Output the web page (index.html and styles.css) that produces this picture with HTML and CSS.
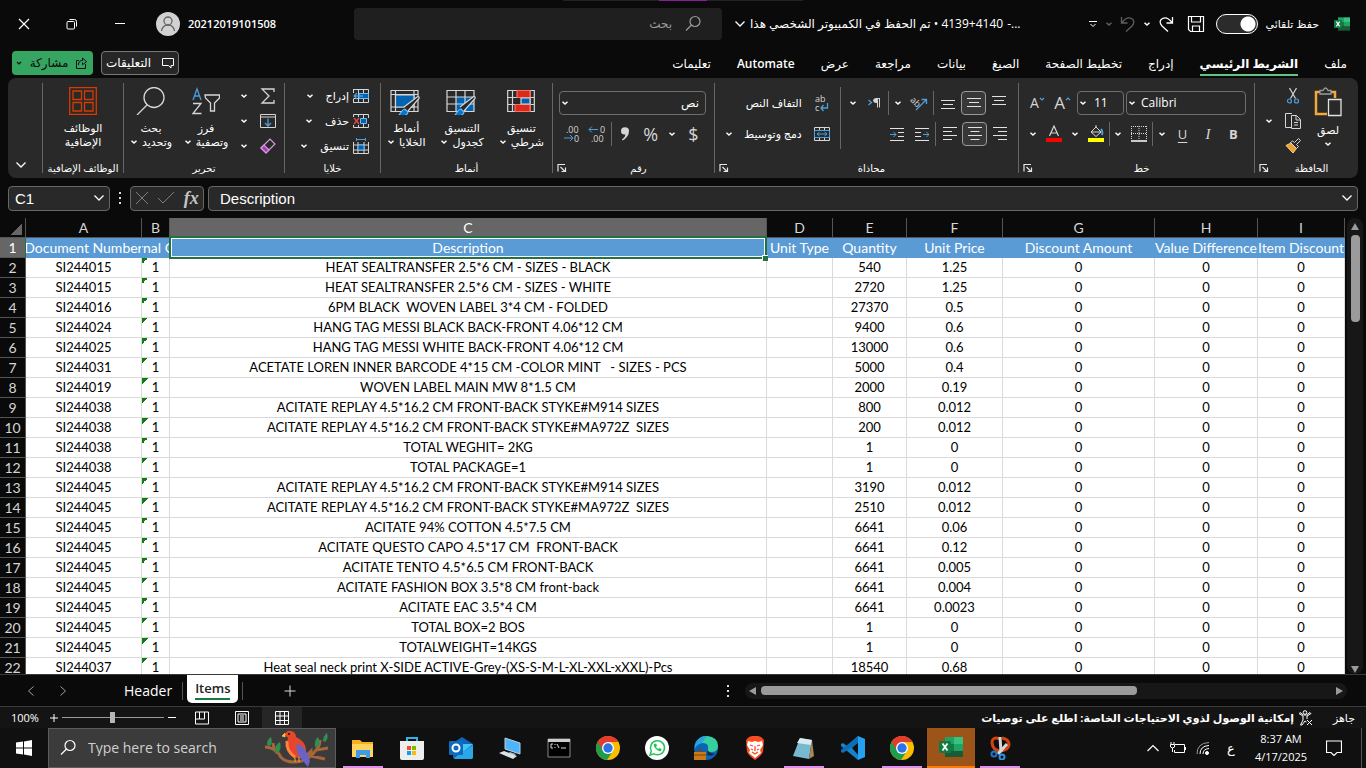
FILE: index.html
```html
<!DOCTYPE html>
<html lang="ar">
<head>
<meta charset="utf-8">
<title>4139+4140 - Excel</title>
<link rel="stylesheet" href="styles.css">
</head>
<body>
<svg class="defs" aria-hidden="true">
  <symbol id="chev" viewBox="0 0 8 8"><path d="M1.5 2.7 4 5l2.500-2.300" fill="none" stroke="#fff" stroke-width="1.500"/></symbol>
  <symbol id="chev-l" viewBox="0 0 12 12"><path d="M1.500 3.500 6 8l4.500-4.500" fill="none" stroke="currentColor" stroke-width="1.300"/></symbol>
  <symbol id="launch" viewBox="0 0 10 10"><path d="M1 8.500V1.500h7M3.500 4l4.500 4.500M8.500 4.500v4h-4" fill="none" stroke="#e6e6e6" stroke-width="1.200"/></symbol>
  <symbol id="mag" viewBox="0 0 18 18"><circle cx="11" cy="6.500" r="5" fill="none" stroke="currentColor" stroke-width="1.200"/><path d="M7.500 10 2 15.500" stroke="currentColor" stroke-width="1.300"/></symbol>
  <symbol id="chrome" viewBox="0 0 24 24"><circle cx="12" cy="12" r="12" fill="#fbbc04"/><path d="M1.600 6A12 12 0 0 0 11 24l6-9-5-3z" fill="#1f9d4d"/><path d="M1.600 6A12 12 0 0 1 22.400 6H12z" fill="#e33b2e"/><path d="m1.600 6 5.400 9 5-9z" fill="#e33b2e"/><path d="m1.600 6 5.400 9-4 1z" fill="#1f9d4d"/><circle cx="12" cy="12" r="6" fill="#fff"/><circle cx="12" cy="12" r="4.700" fill="#2a74ea"/></symbol>
  <symbol id="excel" viewBox="0 0 24 22"><path d="M6 1h9v7H6z" fill="#21a366"/><path d="M15 1h9v7h-9z" fill="#33c481"/><path d="M6 8h9v7H6z" fill="#107c41"/><path d="M15 8h9v7h-9z" fill="#21a366"/><path d="M6 15h18v6H6z" fill="#185c37"/><rect y="5" width="12" height="12" rx="1" fill="#107c41"/><path d="m3.500 7.500 5 7m0-7-5 7" stroke="#fff" stroke-width="1.800"/></symbol>
</svg>

<header class="titlebar">
  <div class="title-left">
    <button class="win" aria-label="إغلاق"><svg width="12" height="12"><path d="m1 1 10 10M11 1 1 11" stroke="#fff" stroke-width="1.200"/></svg></button>
    <button class="win" aria-label="استعادة"><svg width="12" height="12" fill="none" stroke="#fff"><rect x="1" y="3.500" width="7.500" height="7.500" rx="1"/><path d="M3.500 1.500h5q2 0 2 2v5"/></svg></button>
    <button class="win" aria-label="تصغير"><svg width="12" height="12"><path d="M1 5.500h10" stroke="#fff"/></svg></button>
    <button class="user"><svg width="24" height="24" fill="none" stroke="#666" stroke-width="1.300"><circle cx="12" cy="12" r="12" fill="#d2d2d2" stroke="none"/><circle cx="12" cy="9" r="4"/><path d="M5.500 19q1-6 6.500-6t6.500 6"/></svg><span>20212019101508</span></button>
  </div>
  <label class="search"><input type="search" placeholder="بحث" dir="rtl" aria-label="بحث"><svg width="18" height="18"><use href="#mag"/></svg></label>
  <div class="title-right">
    <button class="filename"><svg width="12" height="12"><use href="#chev-l"/></svg><span dir="rtl">4139+4140 • تم الحفظ في الكمبيوتر الشخصي هذا</span><span>-...</span></button>
    <div class="quick">
      <button aria-label="تخصيص"><svg width="10" height="10" fill="none" stroke="#fff"><path d="M1 2.500h8M2.500 5 5 7.500 7.500 5"/></svg></button>
      <button class="dim" aria-label="خيارات التراجع"><svg width="8" height="8"><use href="#chev"/></svg></button>
      <button class="dim" aria-label="تراجع"><svg width="16" height="18" fill="none" stroke="#fff" stroke-width="1.300"><path d="M1.500 2v6h6M2 7.500Q7 1 11.500 3.500T12 11l-6 5.500"/></svg></button>
      <button aria-label="خيارات الإعادة"><svg width="8" height="8"><use href="#chev"/></svg></button>
      <button aria-label="إعادة"><svg width="16" height="18" fill="none" stroke="#fff" stroke-width="1.300"><path d="M14.500 2v6h-6M14 7.500Q9 1 4.500 3.500T4 11l6 5.500"/></svg></button>
      <button class="save" aria-label="حفظ"><svg width="18" height="18" fill="none" stroke="#fff" stroke-width="1.200"><path d="M1.500 1.500h15v15h-13l-2-2zM4.500 1.500V7h9V1.500M5.500 16.500V11h7v5.500"/></svg></button>
      <input type="checkbox" class="toggle" id="autosave" checked>
      <label for="autosave" class="ar-s" dir="rtl">حفظ تلقائي</label>
      <svg class="app" width="16" height="16"><use href="#excel"/></svg>
    </div>
  </div>
</header>

<nav class="tabs">
  <button class="share"><svg width="8" height="8"><path d="M2 3l2 2 2-2" fill="none" stroke="#111" stroke-width="1.200"/></svg><span>مشاركة</span><svg width="12" height="12" fill="none" stroke="#111"><path d="M4 3.500H1.500v8h9V7M3.500 8q0-4.500 4-4.500V1l4 3.700-4 3V5.500"/></svg></button>
  <button class="comments"><span>التعليقات</span><svg width="12" height="12" fill="none" stroke="#fff"><path d="M.5 1.500h11v7H9v2.500L6.500 8.500h-6z"/></svg></button>
  <div class="tablist">
    <button>تعليمات</button><button class="lat">Automate</button><button>عرض</button><button>مراجعة</button><button>بيانات</button><button>الصيغ</button><button>تخطيط الصفحة</button><button>إدراج</button><button class="on">الشريط الرئيسي</button><button>ملف</button>
  </div>
</nav>

<section class="ribbon">
  <div class="g collapse"><button aria-label="طي الشريط"><svg width="12" height="12"><use href="#chev-l"/></svg></button></div>

  <div class="g">
    <div class="body center">
      <button class="big"><svg width="28" height="28" fill="none" stroke="#d83b01" stroke-width="1.300"><path d="M.7.700h26.600v26.600H.7zM4 4h8.500v8.500H4zM15.500 4H24v8.500h-8.500zM4 15.500h8.500V24H4zM15.500 15.500H24V24h-8.500z"/></svg><span>الوظائف</span><span>الإضافية</span></button>
    </div>
    <div class="foot"><span>الوظائف الإضافية</span></div>
  </div>

  <div class="g">
    <div class="body spread">
      <button class="big"><svg width="30" height="28" fill="none" stroke="#d6d6d6" stroke-width="1.300"><circle cx="18" cy="10.500" r="10"/><path d="M11 18 1 28"/></svg><span>بحث</span><span class="dd"><svg width="8" height="8"><use href="#chev"/></svg>وتحديد</span></button>
      <button class="big"><svg width="28" height="28" fill="none" stroke="#d6d6d6" stroke-width="1.300"><path d="M1 13 5 2l4 11M2.500 9h5" stroke="#4a9fdc"/><path d="M1 16.500h8L1 26.500h8.500M13 8h14.500v3l-5 5v8h-4v-8l-5-5z"/></svg><span>فرز</span><span class="dd"><svg width="8" height="8"><use href="#chev"/></svg>وتصفية</span></button>
      <div class="stack">
        <button aria-label="جمع تلقائي"><svg width="8" height="8"><use href="#chev"/></svg><svg width="16" height="16" fill="none" stroke="#d6d6d6" stroke-width="1.300"><path d="M14 4V1H2l7 7-7 7h12v-3"/></svg></button>
        <button aria-label="تعبئة"><svg width="8" height="8"><use href="#chev"/></svg><svg width="16" height="16" fill="none" stroke="#d6d6d6"><path d="M.5 1.500h15v13H.5zM.5 4h15"/><path d="M8 5.500V13M5 10l3 3 3-3" stroke="#4a9fdc" stroke-width="1.300"/></svg></button>
        <button aria-label="مسح"><svg width="8" height="8"><use href="#chev"/></svg><svg width="16" height="16" fill="none" stroke="#d99be0" stroke-width="1.200"><path d="m1 10 9-9 5 5-9 9z"/><path d="m1 10 3-3 5 5-3 3z" fill="#a33db5"/></svg></button>
      </div>
    </div>
    <div class="foot"><span>تحرير</span></div>
  </div>

  <div class="g">
    <div class="body">
      <div class="stack wide">
        <button><svg width="8" height="8"><use href="#chev"/></svg><span>إدراج</span><svg width="16" height="16" fill="none" stroke="#d6d6d6"><path d="M.5 1.500h15v13H.5M5.500 1.500v13M10.500 1.500v13M.5 10.500h15M.5 1v4M.5 11v4"/><path d="M6 5.500h9.500v5H6z" fill="#0063b1" stroke="#7ab8ea"/><path d="M10 8H1M4 5 1 8l3 3" stroke="#4a9fdc" stroke-width="1.300"/></svg></button>
        <button><svg width="8" height="8"><use href="#chev"/></svg><span>حذف</span><svg width="16" height="16" fill="none" stroke="#d6d6d6"><path d="M.5 4V1.500h15V5M.5 12v2.500h15V11M5.500 1.500V4M10.500 1.500v13M5.500 12v2.500"/><path d="M7.500 5.500h6v5h-6z" fill="#0063b1" stroke="#7ab8ea"/><path d="m1 5 5 6M6 5l-5 6" stroke="#e04848" stroke-width="1.300"/></svg></button>
        <button><svg width="8" height="8"><use href="#chev"/></svg><span>تنسيق</span><svg width="16" height="16" fill="none" stroke="#d6d6d6"><path d="M.5 4v11.500h15V4M.5 7h15M.5 12h15M5 4v11.500M11 4v11.500"/><path d="M5 7h6v5H5z" fill="#0063b1" stroke="#7ab8ea"/><path d="M3.500 1.500h9M3.500 0v3M12.500 0v3" stroke="#4a9fdc"/></svg></button>
      </div>
    </div>
    <div class="foot"><span>خلايا</span></div>
  </div>

  <div class="g">
    <div class="body spread">
      <button class="big"><svg width="32" height="28" fill="none" stroke="#d6d6d6" stroke-width="1.200"><path d="M1 3.500h27v21H1zM1 7.500h27M5.500 3.500v21M24 3.500v21M1 20h27"/><path d="M5.500 8H24v12H5.500z" fill="#0063b1"/><path d="m14 20 13-10q3-1 2 1.500L18 24" fill="#292929"/><path d="M9 28q4-6 6-6l3 3q-1 5-9 3z" fill="#0078d4" stroke="#7ab8ea"/></svg><span>أنماط</span><span class="dd"><svg width="8" height="8"><use href="#chev"/></svg>الخلايا</span></button>
      <button class="big"><svg width="32" height="28" fill="none" stroke="#d6d6d6" stroke-width="1.200"><path d="M10 10h18v14H10z" fill="#0063b1" stroke="none"/><path d="M1 3.500h27v21H1zM1 10h27M1 17h27M10 3.500v21M19 3.500v21"/><path d="m14 20 13-10q3-1 2 1.500L18 24" fill="#292929"/><path d="M9 28q4-6 6-6l3 3q-1 5-9 3z" fill="#0078d4" stroke="#7ab8ea"/></svg><span>التنسيق</span><span class="dd"><svg width="8" height="8"><use href="#chev"/></svg>كجدول</span></button>
      <button class="big"><svg width="28" height="28" fill="none" stroke="#d6d6d6" stroke-width="1.200"><path d="M.7 3.500h26.600v21H.7zM.7 10.500h26.600M.7 17.500h26.600M5.500 3.500v21M23 3.500v21"/><path d="M10 3.500h13v7H10zM8 17.500h15v7H8z" fill="#d92b1c" stroke="#ff6b60"/><path d="M14 11h9v6h-9z" fill="#0063b1"/></svg><span>تنسيق</span><span class="dd"><svg width="8" height="8"><use href="#chev"/></svg>شرطي</span></button>
    </div>
    <div class="foot"><span>أنماط</span></div>
  </div>

  <div class="g">
    <div class="body rows">
      <div class="row"><div class="combo grow"><svg width="8" height="8"><use href="#chev"/></svg><select dir="rtl" aria-label="تنسيق الأرقام"><option>نص</option></select></div></div>
      <div class="row between">
        <button aria-label="إنقاص المنازل"><svg class="txt" width="18" height="18"><text x="3" y="8">.00</text><text x="11" y="17">0</text><path d="M1 13h9M7 10l3 3-3 3" fill="none" stroke="#4a9fdc"/></svg></button>
        <button aria-label="زيادة المنازل"><svg class="txt" width="18" height="18"><text x="12" y="8">0</text><text x="3" y="17">.00</text><path d="M10 4.500H1M4 1.500l-3 3 3 3" fill="none" stroke="#4a9fdc"/></svg></button>
        <i class="sep"></i>
        <button aria-label="فاصلة"><svg width="10" height="14"><path d="M1 4a4 3.700 0 1 1 8 0q0 6-6.500 9.500l-.5-1Q5.500 10 5.500 7.500 1 8 1 4z" fill="#d6d6d6"/></svg></button>
        <button class="sym">%</button>
        <button class="nar" aria-label="عملات"><svg width="8" height="8"><use href="#chev"/></svg></button>
        <button class="sym">$</button>
      </div>
    </div>
    <div class="foot"><svg class="launch" width="10" height="10"><use href="#launch"/></svg><span>رقم</span></div>
  </div>

  <div class="g">
    <div class="body split">
      <div class="half">
        <div class="row end"><button class="lab"><span>التفاف النص</span><svg class="txt" width="16" height="18"><text x="1" y="8">ab</text><text x="1" y="17">c</text><path d="M13.500 9v5H7M9.500 11 7 14l2.500 3" fill="none" stroke="#4a9fdc" stroke-width="1.300"/></svg></button></div>
        <div class="row between"><button class="nar" aria-label="خيارات الدمج"><svg width="8" height="8"><use href="#chev"/></svg></button><button class="lab"><span>دمج وتوسيط</span><svg width="16" height="16" fill="none" stroke="#d6d6d6"><path d="M.5 1.500h15v13H.5zM5.500 1.500v3M10.500 1.500v3M5.500 11v3M10.500 11v3"/><path d="M.5 4.500h15v7H.5zM3 8h10M5.500 6 3 8l2.500 2M10.500 6 13 8l-2.500 2" stroke="#4a9fdc"/></svg></button></div>
      </div>
      <div class="half wide">
        <div class="row between">
          <button class="nar" aria-label="اتجاه"><svg width="8" height="8"><use href="#chev"/></svg></button>
          <button aria-label="من اليمين لليسار"><svg width="14" height="12" fill="none" stroke="#d6d6d6"><path d="M13 1.500H9M10.500 1.500v9M12.500 1.500v9"/><path d="M10 1.500H8.500q-2 .5-2 2t2 2H10z" fill="#d6d6d6"/><path d="m1.500 3 3 2.500-3 2.500" stroke="#4a9fdc" stroke-width="1.300"/></svg></button>
          <i class="sep"></i>
          <button class="nar" aria-label="اتجاه النص"><svg width="8" height="8"><use href="#chev"/></svg></button>
          <button aria-label="الاتجاه"><svg class="txt" width="18" height="18"><text x="0" y="10" transform="rotate(45 4 8)">ab</text><path d="M6 16 16 6M11.500 5.500H16.500V10" fill="none" stroke="#4a9fdc" stroke-width="1.300"/></svg></button>
          <i class="sep"></i>
          <button aria-label="أسفل"><svg width="14" height="14" stroke="#e2e2e2"><path d="M0 4.500h14M2 8.500h10M0 12.500h14"/></svg></button>
          <button class="sel" aria-label="وسط"><svg width="14" height="14" stroke="#e2e2e2"><path d="M0 2.500h14M2 6.500h10M0 10.500h14"/></svg></button>
          <button aria-label="أعلى"><svg width="14" height="14" stroke="#e2e2e2"><path d="M0 .5h14M2 4.500h10M0 8.500h14"/></svg></button>
        </div>
        <div class="row end">
          <button aria-label="مسافة أقل"><svg width="14" height="14" fill="none" stroke="#e2e2e2"><path d="M0 1.500h14M8 5.500h6M8 9.500h6M0 13.500h14"/><path d="M0 7.500h6M3.500 5 6 7.500 3.500 10" stroke="#4a9fdc"/></svg></button>
          <button aria-label="مسافة أكبر"><svg width="14" height="14" fill="none" stroke="#e2e2e2"><path d="M0 1.500h14M0 5.500h6M0 9.500h6M0 13.500h14"/><path d="M8 7.500h6M11.500 5 14 7.500 11.500 10" stroke="#4a9fdc"/></svg></button>
          <i class="sep"></i>
          <button aria-label="يسار"><svg width="14" height="14" stroke="#e2e2e2"><path d="M0 .5h14M0 4.500h9M0 8.500h14M0 12.500h9"/></svg></button>
          <button class="sel" aria-label="توسيط"><svg width="14" height="14" stroke="#e2e2e2"><path d="M0 .5h14M2.500 4.500h9M0 8.500h14M2.500 12.500h9"/></svg></button>
          <button aria-label="يمين"><svg width="14" height="14" stroke="#e2e2e2"><path d="M0 .5h14M5 4.500h9M0 8.500h14M5 12.500h9"/></svg></button>
        </div>
      </div>
    </div>
    <div class="foot"><svg class="launch" width="10" height="10"><use href="#launch"/></svg><span>محاذاة</span></div>
  </div>

  <div class="g">
    <div class="body rows">
      <div class="row">
        <button class="fs small">A<svg width="6" height="12"><path d="m1 1 2 2 2-2" fill="none" stroke="#4a9fdc" stroke-width="1.200"/></svg></button>
        <button class="fs">A<svg width="6" height="12"><path d="m1 3 2-2 2 2" fill="none" stroke="#4a9fdc" stroke-width="1.200"/></svg></button>
        <div class="combo size"><svg width="8" height="8"><use href="#chev"/></svg><select aria-label="حجم الخط"><option>11</option></select></div>
        <div class="combo grow"><svg width="8" height="8"><use href="#chev"/></svg><select aria-label="الخط"><option>Calibri</option></select></div>
      </div>
      <div class="row between">
        <button class="nar" aria-label="ألوان الخط"><svg width="8" height="8"><use href="#chev"/></svg></button>
        <button aria-label="لون الخط"><svg width="16" height="18"><path d="M3.500 11 8 1l4.500 10M5 8h6" fill="none" stroke="#d6d6d6" stroke-width="1.200"/><path d="M0 13h16v4H0z" fill="#f00"/></svg></button>
        <button class="nar" aria-label="ألوان التعبئة"><svg width="8" height="8"><use href="#chev"/></svg></button>
        <button aria-label="لون التعبئة"><svg width="16" height="18" fill="none" stroke="#d6d6d6"><path d="m8 2 5 5-5 4.500L3 7zM8 2V0M3 7h9"/><path d="M13 4q2 2 1 6" stroke="#4a9fdc" stroke-width="2"/><path d="M0 13h16v4H0z" fill="#ff0" stroke="none"/></svg></button>
        <i class="sep"></i>
        <button class="nar" aria-label="خيارات الحدود"><svg width="8" height="8"><use href="#chev"/></svg></button>
        <button aria-label="حدود"><svg width="16" height="16" fill="none" stroke="#d6d6d6"><path d="M0 .5h16M0 7.500h16M.5 0v14M8 0v14M15.500 0v14" stroke-dasharray="1 1"/><path d="M0 15h16" stroke="#fff" stroke-width="1.500"/></svg></button>
        <i class="sep"></i>
        <button class="nar" aria-label="خيارات التسطير"><svg width="8" height="8"><use href="#chev"/></svg></button>
        <button class="fmt u">U</button><button class="fmt i">I</button><button class="fmt b">B</button>
      </div>
    </div>
    <div class="foot"><svg class="launch" width="10" height="10"><use href="#launch"/></svg><span>خط</span></div>
  </div>

  <div class="g">
    <div class="body clip">
      <div class="stack">
        <button aria-label="قص"><svg width="16" height="18" fill="none" stroke="#d6d6d6" stroke-width="1.200"><path d="m4.500 1 6 10.500M11.500 1l-6 10.500"/><g stroke="#4a9fdc"><circle cx="4.500" cy="14" r="2"/><circle cx="11.500" cy="14" r="2"/></g></svg></button>
        <button aria-label="نسخ"><svg width="8" height="8"><use href="#chev"/></svg><svg width="16" height="18" fill="none" stroke="#d6d6d6"><path d="M6 15.500H.5v-14H7M6.500 3.500h5l4 4v9h-9zM11 3.500V8h4.500M9 10.500h4M9 13h4"/></svg></button>
        <button aria-label="نسخ التنسيق"><svg width="16" height="16" fill="none" stroke="#d6d6d6"><path d="M1 7.500 8 15l3.500-4.500L6 5z" fill="#f0a030" stroke="#f7d08a"/><path d="m5.500 4.500 6 6 2-2-2-2 4-4-2-2-4 4-2-1.500z"/></svg></button>
      </div>
      <button class="big"><svg width="28" height="30" fill="none"><path d="M13 27H2V5h19v6" stroke="#f2a83b" stroke-width="2.500"/><path d="M6 7V3.500h3q2.500-5 5 0h3V7z" fill="#292929" stroke="#9a9a9a" stroke-width="1.300"/><path d="M14.500 12.500h12.500v16H14.500z" fill="#292929" stroke="#e2e2e2" stroke-width="1.300"/></svg><span>لصق</span><span class="dd"><svg width="8" height="8"><use href="#chev"/></svg></span></button>
    </div>
    <div class="foot"><svg class="launch" width="10" height="10"><use href="#launch"/></svg><span>الحافظة</span></div>
  </div>
</section>

<section class="formula">
  <div class="box name"><input value="C1" aria-label="مربع الاسم"><button aria-label="الأسماء"><svg width="12" height="12"><use href="#chev-l"/></svg></button></div>
  <span class="dots"></span>
  <div class="box fx">
    <button aria-label="إلغاء"><svg width="14" height="14"><path d="m1 1 12 12M13 1 1 13" stroke="#7d7d7d"/></svg></button>
    <button aria-label="إدخال"><svg width="18" height="14"><path d="m1 7 5 5L17 1" fill="none" stroke="#7d7d7d"/></svg></button>
    <button class="fn">fx</button>
  </div>
  <div class="box text"><input value="Description" aria-label="شريط الصيغة"><button aria-label="توسيع"><svg width="12" height="12"><use href="#chev-l"/></svg></button></div>
</section>

<main class="sheet">
  <div class="cells">
  <table>
    <colgroup><col class="c-n"><col class="c-a"><col class="c-b"><col><col class="c-d"><col class="c-e"><col class="c-f"><col class="c-g"><col class="c-h"><col class="c-i"></colgroup>
    <thead><tr><th class="corner"></th><th>A</th><th>B</th><th class="on">C</th><th>D</th><th>E</th><th>F</th><th>G</th><th>H</th><th>I</th></tr></thead>
    <tbody>
    <tr class="head"><th>1<td><span>Document Number</span><td><span>Internal Code</span><td class="current"><span>Description</span><td><span>Unit Type</span><td><span>Quantity</span><td><span>Unit Price</span><td><span>Discount Amount</span><td><span>Value Difference</span><td><span>Item Discount</span></td></tr>
    <tr><th>2<td>SI244015<td>1<td>HEAT SEALTRANSFER 2.5*6 CM - SIZES - BLACK<td><td>540<td>1.25<td>0<td>0<td>0</td></tr>
    <tr><th>3<td>SI244015<td>1<td>HEAT SEALTRANSFER 2.5*6 CM - SIZES - WHITE<td><td>2720<td>1.25<td>0<td>0<td>0</td></tr>
    <tr><th>4<td>SI244016<td>1<td>6PM BLACK  WOVEN LABEL 3*4 CM - FOLDED<td><td>27370<td>0.5<td>0<td>0<td>0</td></tr>
    <tr><th>5<td>SI244024<td>1<td>HANG TAG MESSI BLACK BACK-FRONT 4.06*12 CM<td><td>9400<td>0.6<td>0<td>0<td>0</td></tr>
    <tr><th>6<td>SI244025<td>1<td>HANG TAG MESSI WHITE BACK-FRONT 4.06*12 CM<td><td>13000<td>0.6<td>0<td>0<td>0</td></tr>
    <tr><th>7<td>SI244031<td>1<td>ACETATE LOREN INNER BARCODE 4*15 CM -COLOR MINT   - SIZES - PCS<td><td>5000<td>0.4<td>0<td>0<td>0</td></tr>
    <tr><th>8<td>SI244019<td>1<td>WOVEN LABEL MAIN MW 8*1.5 CM<td><td>2000<td>0.19<td>0<td>0<td>0</td></tr>
    <tr><th>9<td>SI244038<td>1<td>ACITATE REPLAY 4.5*16.2 CM FRONT-BACK STYKE#M914 SIZES<td><td>800<td>0.012<td>0<td>0<td>0</td></tr>
    <tr><th>10<td>SI244038<td>1<td>ACITATE REPLAY 4.5*16.2 CM FRONT-BACK STYKE#MA972Z  SIZES<td><td>200<td>0.012<td>0<td>0<td>0</td></tr>
    <tr><th>11<td>SI244038<td>1<td>TOTAL WEGHIT= 2KG<td><td>1<td>0<td>0<td>0<td>0</td></tr>
    <tr><th>12<td>SI244038<td>1<td>TOTAL PACKAGE=1<td><td>1<td>0<td>0<td>0<td>0</td></tr>
    <tr><th>13<td>SI244045<td>1<td>ACITATE REPLAY 4.5*16.2 CM FRONT-BACK STYKE#M914 SIZES<td><td>3190<td>0.012<td>0<td>0<td>0</td></tr>
    <tr><th>14<td>SI244045<td>1<td>ACITATE REPLAY 4.5*16.2 CM FRONT-BACK STYKE#MA972Z  SIZES<td><td>2510<td>0.012<td>0<td>0<td>0</td></tr>
    <tr><th>15<td>SI244045<td>1<td>ACITATE 94% COTTON 4.5*7.5 CM<td><td>6641<td>0.06<td>0<td>0<td>0</td></tr>
    <tr><th>16<td>SI244045<td>1<td>ACITATE QUESTO CAPO 4.5*17 CM  FRONT-BACK<td><td>6641<td>0.12<td>0<td>0<td>0</td></tr>
    <tr><th>17<td>SI244045<td>1<td>ACITATE TENTO 4.5*6.5 CM FRONT-BACK<td><td>6641<td>0.005<td>0<td>0<td>0</td></tr>
    <tr><th>18<td>SI244045<td>1<td>ACITATE FASHION BOX 3.5*8 CM front-back<td><td>6641<td>0.004<td>0<td>0<td>0</td></tr>
    <tr><th>19<td>SI244045<td>1<td>ACITATE EAC 3.5*4 CM<td><td>6641<td>0.0023<td>0<td>0<td>0</td></tr>
    <tr><th>20<td>SI244045<td>1<td>TOTAL BOX=2 BOS<td><td>1<td>0<td>0<td>0<td>0</td></tr>
    <tr><th>21<td>SI244045<td>1<td>TOTALWEIGHT=14KGS<td><td>1<td>0<td>0<td>0<td>0</td></tr>
    <tr><th>22<td>SI244037<td>1<td>Heat seal neck print X-SIDE ACTIVE-Grey-(XS-S-M-L-XL-XXL-xXXL)-Pcs<td><td>18540<td>0.68<td>0<td>0<td>0</td></tr>
    </tbody>
  </table>
  </div>
  <div class="vscroll"><svg width="8" height="8"><path d="M4 0l4 7H0z" fill="#9b9b9b"/></svg><i></i><svg class="down" width="8" height="8"><path d="M0 1h8L4 8z" fill="#9b9b9b"/></svg></div>
</main>

<section class="sheets">
  <div class="sheets-left">
    <button class="nav" aria-label="السابق"><svg width="8" height="12"><path d="M6.500 1.500 1.500 6l5 4.500" fill="none" stroke="#a0a0a0"/></svg></button>
    <button class="nav" aria-label="التالي"><svg width="8" height="12"><path d="M1.500 1.500l5 4.500-5 4.500" fill="none" stroke="#a0a0a0"/></svg></button>
    <button class="sh">Header</button><i class="sep"></i><button class="sh on"><span>Items</span></button><i class="sep"></i>
    <button class="add" aria-label="ورقة جديدة"><svg width="12" height="12"><path d="M6 .5v11M.5 6h11" stroke="#d6d6d6"/></svg></button>
  </div>
  <div class="sheets-right">
    <span class="dots"></span>
    <div class="hscroll"><svg width="8" height="8"><path d="M0 4l7-4v8z" fill="#9b9b9b"/></svg><div class="track"><i></i></div><svg width="8" height="8"><path d="M8 4 1 0v8z" fill="#9b9b9b"/></svg></div>
  </div>
</section>

<footer class="status">
  <span class="pct">100%</span>
  <button aria-label="تكبير"><svg width="8" height="8"><path d="M4 0v8M0 4h8" stroke="#fff"/></svg></button>
  <input type="range" aria-label="التكبير" value="49">
  <button aria-label="تصغير"><svg width="8" height="8"><path d="M0 3.500h8" stroke="#fff"/></svg></button>
  <div class="views">
    <button aria-label="فواصل الصفحات"><svg width="14" height="14" fill="none" stroke="#fff"><path d="M.5 1h13v12H.5zM4.500 1v7h5V1M.5 8h4M9.500 1v7"/></svg></button>
    <button aria-label="تخطيط الصفحة"><svg width="14" height="14" fill="none" stroke="#fff"><path d="M.5.500h13v13H.5zM3 3h8v8H3zM5 5h4M5 7h4M5 9h4"/></svg></button>
    <button class="on" aria-label="عادي"><svg width="14" height="14" fill="none" stroke="#fff"><path d="M.5.500h13v13H.5zM5 .5v13M9.500.500v13M.5 5h13M.5 9.500h13"/></svg></button>
  </div>
  <span class="acc" dir="rtl">إمكانية الوصول لذوي الاحتياجات الخاصة: اطلع على توصيات</span>
  <svg width="14" height="16" fill="none" stroke="#fff"><circle cx="6" cy="2.500" r="1.800"/><path d="M0 3.500 4 6v4l-2.500 5L3 15l3-4 1.500 1M12 3.500 8 6v3M0 3.500l1-1L4.500 5h3L11 2.500l1 1M8 10l5 5M13 10l-5 5"/></svg>
  <span class="ready">جاهز</span>
</footer>

<nav class="taskbar">
  <button class="start" aria-label="Start"><svg width="16" height="16" fill="#fff"><path d="M0 2.500 7 1.500v6H0zM8 1.400 16 0v7.500H8zM0 8.500h7v6L0 13.500zM8 8.500h8V16l-8-1.400z"/></svg></button>
  <label class="tsearch"><svg width="18" height="18"><use href="#mag"/></svg><input type="search" placeholder="Type here to search" aria-label="Type here to search">
    <svg width="68" height="38" fill="none"><path d="M2 18q8 0 14 7 3 8 15 8 14 0 22-12l12-2M14 24q-4-6-4-10M48 27l14 3M40 31q8-2 8-9l-4 4M53 21q4-4 4-10" stroke="#a8653a" stroke-width="3"/><path d="M4 16q0-6 4-8 2 6-1 9zM12 23q0-8 5-10 2 7-2 11zM52 18q-1-7 3-10 3 6 0 10zM60 12q0-5 4-8 2 6-2 9z" fill="#2f8f4e"/><path d="M22 6q1-5 6-4 5 1 5 6 9 4 10 12 0 6-5 9-12 0-14-10 0-7 1-10z" fill="#e6472a"/><path d="M33 15q9 0 14 17l-2 6-5-6q-6-5-7-17z" fill="#6b62c5"/><path d="M24 12q-1 10 8 16" stroke="#ff8244" stroke-width="3"/><circle cx="26" cy="5" r="1" fill="#111"/><path d="m22 4-3 3 3 1zM32 28v5M36 28v5" fill="#f6c23c" stroke="#f6b02c"/></svg>
  </label>
  <div class="apps">
    <button class="run" aria-label="Explorer"><svg width="24" height="24"><path d="M1 4h8l2 2h11v15H1z" fill="#f2b21f"/><path d="M1 8h21v13H1z" fill="#ffd35c"/><path d="M5 14h14v8h-4v-3H9v3H5z" fill="#3a9be8"/></svg></button>
    <button aria-label="Store"><svg width="24" height="24"><path d="M7 6V2h10v4" fill="none" stroke="#2bb3ea" stroke-width="2"/><path d="M0 5h24v17q0 2-2 2H2q-2 0-2-2z" fill="#eee"/><path d="M7 10h4v4H7z" fill="#f25022"/><path d="M12 10h4v4h-4z" fill="#7fba00"/><path d="M7 15h4v4H7z" fill="#00a4ef"/><path d="M12 15h4v4h-4z" fill="#ffb900"/></svg></button>
    <button aria-label="Outlook"><svg width="24" height="24"><path d="m4 7 9-6 11 7v13q0 2-2 2H6q-2 0-2-2z" fill="#1264b8"/><path d="M4 8h20L14 16z" fill="#42c5f5"/><path d="m24 9-19 13 1 1h16q2 0 2-2z" fill="#28a8ea"/><rect y="5" width="14" height="14" rx="1" fill="#0f6cbd"/><circle cx="7" cy="12" r="3.500" fill="none" stroke="#fff" stroke-width="2"/></svg></button>
    <button aria-label="PC"><svg width="24" height="24"><path d="m7 2 15 5v11L7 13z" fill="#4db4ff" stroke="#b9cedb"/><path d="m12 16 6 2-3 3-6-3z" fill="#9aa7ae"/><path d="m1 17 5-2 13 5-4 3z" fill="#dbe2e6"/></svg></button>
    <button aria-label="Terminal"><svg width="24" height="24"><path d="M1 3h22v18H1z" fill="#000" stroke="#888"/><path d="M1 3h22v3H1z" fill="#ccc"/><path d="M6 8H4v4h2M8 8v1M8 11v1M10 8l2 4M14 12h5" stroke="#ddd" fill="none"/></svg></button>
    <button aria-label="Chrome"><svg width="24" height="24"><use href="#chrome"/></svg></button>
    <button aria-label="WhatsApp"><svg width="24" height="24" fill="none"><circle cx="12" cy="12" r="12" fill="#fff"/><path d="m5 19 1.300-4A7 7 0 1 1 9 17.800z" stroke="#25c45a" stroke-width="1.500"/><path d="M9 8q-1 2 2 5t5 2l.5-2-2-1-1.500 1-2-2 1-1.500-1-2z" fill="#25c45a"/></svg></button>
    <button aria-label="Edge"><svg width="24" height="24"><circle cx="12" cy="12" r="12" fill="#0e63b5"/><path d="M1 9Q4 0 13 0q11 1 11 10 0 6-7 6-4 0-3-3 1-6-5-6-5 0-8 5z" fill="#37cfa0"/><path d="M1 9Q4 0 13 0q-4 5-5 7-5 1-7 5z" fill="#27a3df"/><path d="M14 13q-1 4 7 5-3 3-8 1z" fill="#112b4a"/><path d="M0 16h12v8H0z" fill="#c97a16"/><path d="M4 16v-2h4v2M0 19h12" fill="none" stroke="#7a450b"/></svg></button>
    <button aria-label="Brave"><svg width="24" height="24"><path d="m6 1 3-1h6l3 1 3 3-1 12q-2 4-8 8-6-4-8-8L3 4z" fill="#fb4c1f"/><path d="m5 5 4 1 3-1 3 1 4-1 1 4-3 5 1 3-6 5-6-5 1-3-3-5z" fill="#fff"/><path d="m7 9 3 1M17 9l-3 1M12 10v5M9 16l3 2 3-2M8 13l2 1M16 13l-2 1" stroke="#fb4c1f" stroke-width="1.300" fill="none"/></svg></button>
    <button class="run" aria-label="Notepad"><svg width="24" height="24"><path d="m8 2 12 2-3 19L1 20z" fill="#77b9cf"/><path d="m20 4 2 16-5 3z" fill="#a8865a"/><path d="m8 2 12 2-1 5-14-2z" fill="#d9ebf0"/></svg></button>
    <button aria-label="VS Code"><svg width="24" height="24"><path d="M17 0 6 10 2 7 0 8v2l17 14 1-4-7-8 7-7z" fill="#1382cf"/><path d="m0 14 17-14v7L2 17l-2-1z" fill="#0d6eb5"/><path d="m17 0 7 3v18l-7 3z" fill="#26a1f2"/></svg></button>
    <button class="run" aria-label="Chrome"><svg width="24" height="24"><use href="#chrome"/></svg></button>
    <button class="active" aria-label="Excel"><svg width="24" height="24"><use href="#excel"/></svg></button>
    <button class="run" aria-label="Snip"><svg width="24" height="24" fill="none"><path d="M12 3Q4 0 4 7q1 8 9 8 7-1 8-6 0-6-7-7" stroke="#d4430f" stroke-width="3"/><path d="m12 1 1 15M19 8l-9 10" stroke="#d6d6d6" stroke-width="3"/><circle cx="6" cy="18" r="2.500" stroke="#1c77c9" stroke-width="2"/><circle cx="14" cy="21" r="2.500" stroke="#2a95e8" stroke-width="2"/></svg></button>
  </div>
  <div class="tray">
    <button aria-label="Hidden icons"><svg width="12" height="8"><path d="m.5 7 5.500-5.500L11.500 7" fill="none" stroke="#fff" stroke-width="1.200"/></svg></button>
    <button aria-label="Battery"><svg width="16" height="14" fill="none" stroke="#fff"><path d="M5 3.500h9.500v8H4.500V9M15.500 6v3M1 1v2M4 1v2M.5 3.500h4V6Q2.500 8 .5 6zM2.500 7v4"/></svg></button>
    <button aria-label="Wi-Fi"><svg width="14" height="14" fill="none" stroke="#fff"><path d="M1 13Q1 2 13 1.500" stroke="#999"/><path d="M4 13q0-8 9-8.500M7 13q0-5 6-5.500"/><circle cx="11" cy="12" r="1.500" fill="#fff"/></svg></button>
    <button class="lang">ع</button>
    <button class="clock"><span>8:37 AM</span><span>4/17/2025</span></button>
    <button class="note" aria-label="Notifications"><svg width="16" height="16"><path d="M.5 1h15v11.500H11L8 15.500l-3-3H.5z" fill="none" stroke="#fff" stroke-width="1.200"/></svg></button>
    <i class="desk"></i>
  </div>
</nav>
</body>
</html>
```
FILE: styles.css
```css
* { box-sizing: border-box; }
html, body { height: 100%; margin: 0; }
body {
  display: flex; flex-direction: column; overflow: hidden;
  background: #0a0a0a; color: #fff;
  font: 12px/16px "Open Sans", "DejaVu Sans", sans-serif;
}
button, input, select { font: inherit; color: inherit; background: none; border: 0; margin: 0; padding: 0; min-width: 0; }
button { display: flex; align-items: center; justify-content: center; white-space: nowrap; }
svg { flex: none; display: block; }
.defs { position: absolute; width: 0; height: 0; }
input:focus, select:focus { outline: none; }

/* title bar */
.titlebar {
  display: grid; grid-template-columns: 354fr 368fr 644fr; align-items: center; height: 48px; flex: none;
  background: linear-gradient(#8a1a9c, #8a1a9c) 50% 0 / 48px 1px no-repeat, linear-gradient(#222, #222) 50% 0 / 240px 1px no-repeat;
}
.title-left { display: flex; align-items: center; }
.win { width: 48px; height: 32px; }
.user { gap: 8px; margin-left: 12px; font-size: 11px; font-weight: 600; }
.search { display: flex; align-items: center; gap: 12px; height: 32px; padding: 0 20px; background: #1f1f1f; border-radius: 4px; color: #9a9a9a; }
.search input { flex: 1; font-size: 12px; }
.search input::placeholder, .tsearch input::placeholder { color: inherit; opacity: 1; }
.title-right { display: flex; align-items: center; justify-content: space-between; padding: 0 16px 0 12px; }
.filename { gap: 4px; font-size: 12px; }
.quick { display: flex; align-items: center; gap: 7px; }
.quick .dim { opacity: .35; }
.quick .save { margin: 0 4px 0 6px; }
.ar-s { font-size: 11px; margin-right: 8px; white-space: nowrap; }
.toggle { appearance: none; width: 42px; height: 20px; border: 1px solid #fff; border-radius: 10px; background: radial-gradient(circle at 31px 9px, #fff 7px, #2b2b2b 8px); }

/* tabs */
.tabs { display: flex; align-items: center; height: 30px; flex: none; padding: 0 19px 0 12px; }
.share, .comments { height: 24px; border-radius: 4px; justify-content: space-between; }
.share { width: 81px; padding: 0 6px 0 3px; background: #35a561; color: #0a0a0a; }
.comments { width: 78px; padding: 0 4px; margin-left: 8px; border: 1px solid #777; background: #262626; }
.tablist { display: flex; gap: 26px; margin-left: auto; }
.tablist button { height: 26px; padding-top: 3px; font-size: 12px; border-bottom: 2px solid transparent; }
.tablist .lat { font-weight: 600; }
.tablist .on { font-weight: 700; border-color: #5fc486; }

/* ribbon */
.ribbon {
  display: grid; grid-template-columns: 34fr 81fr 161fr 96fr 172fr 162fr 304fr 236fr 104fr;
  flex: none; margin: 0 8px; padding: 5px 0; border-radius: 8px; background: #292929; font-size: 11px;
}
.g { display: flex; flex-direction: column; min-width: 0; height: 90px; border-left: 1px solid #666; }
.g.collapse { border: 0; justify-content: flex-end; align-items: center; padding: 0 8px 2px 0; }
.body { display: flex; height: 75px; flex: none; }
.body.center { justify-content: center; }
.body.spread { justify-content: space-between; padding: 0 8px 0 6px; }
.foot { display: flex; align-items: center; height: 16px; padding: 4px 4px 0; font-size: 10px; white-space: nowrap; }
.foot span { flex: 1; text-align: center; }
.big { flex-direction: column; justify-content: flex-start; height: 70px; padding-top: 4px; line-height: 14px; }
.big > svg { margin-bottom: 6px; }
.dd { display: flex; align-items: center; gap: 4px; min-height: 14px; }
.stack { display: flex; flex-direction: column; }
.stack button { height: 25px; gap: 12px; justify-content: flex-end; }
.stack.wide { flex: 1; padding-right: 11px; }
.stack.wide button { gap: 4px; }
.stack.wide button > svg:first-child { margin-right: 8px; }
.rows { flex-direction: column; padding: 4px 8px 0 6px; }
.row { display: flex; align-items: center; height: 31px; }
.row button { width: 25px; height: 24px; border-radius: 4px; }
.row button.nar { width: 16px; }
.row button.lab { width: auto; gap: 12px; }
.row.between { justify-content: space-between; }
.row.end { justify-content: flex-end; }
.row .sep { flex: none; width: 1px; height: 24px; background: #666; }
.row .sel { border: 1px solid #9a9a9a; background: #383838; }
.combo { display: flex; align-items: center; gap: 5px; height: 24px; padding: 0 6px 0 1px; border: 1px solid #6e6e6e; border-radius: 4px; }
.combo select { appearance: none; flex: 1; font-size: 12px; }
.combo.size { width: 47px; margin: 0 2px; }
.combo.size select { padding-left: 2px; }
.grow { flex: 1; }
.row .sym { font-size: 18px; color: #d6d6d6; }
.txt { overflow: visible; }
.txt text { font: 9px "Open Sans", sans-serif; fill: #d6d6d6; }
.fs { align-items: center; font-size: 17px; color: #d6d6d6; }
.fs.small { font-size: 14px; }
.fmt { font-size: 13px; color: #d6d6d6; }
.u { text-decoration: underline; text-underline-offset: 3px; }
.i { font-family: "Liberation Serif", serif; font-style: italic; font-size: 15px; }
.b { font-weight: 700; }
.split { padding: 4px 6px 0 6px; }
.half { flex: 117; padding-right: 10px; }
.half.wide { flex: 180; padding: 0 0 0 4px; border-left: 1px solid #666; height: 62px; }
.half.wide .sep { margin: 0 1px; }
.clip { justify-content: space-between; padding: 0 16px 0 10px; }

/* formula bar */
.formula { display: flex; align-items: center; height: 40px; flex: none; padding: 0 8px; }
.box { display: flex; align-items: center; height: 25px; border: 1px solid #666; border-radius: 4px; background: #292929; font: 15px "Liberation Sans", sans-serif; }
.box input { flex: 1; padding-left: 6px; }
.box button { padding: 0 4px; }
.name { width: 102px; }
.fx { width: 74px; justify-content: space-around; margin-right: 4px; }
.box.text { flex: 1; }
.box.text input { padding-left: 11px; }
.box .fn { font: italic 700 18px "Liberation Serif", serif; color: #c4c4c4; }
.dots { width: 20px; height: 12px; background: linear-gradient(#ddd 2px, transparent 2px) 50% 0 / 2px 5px repeat-y; }

/* grid */
.sheet { flex: 1; display: flex; min-height: 0; }
.cells { flex: 1; overflow: hidden; }
table { width: 100%; table-layout: fixed; border-collapse: separate; border-spacing: 0; font: 13px/19px Lato, sans-serif; }
.c-n { width: 26px; } .c-a { width: 116px; } .c-b { width: 28px; } .c-d { width: 66px; } .c-e { width: 74px; }
.c-f { width: 96px; } .c-g { width: 152px; } .c-h { width: 103px; } .c-i { width: 87px; }
th, td { height: 20px; padding: 0; text-align: center; font-weight: 400; white-space: pre; border: 0 solid #dadada; border-width: 0 1px 1px 0; }
td { background: #fff; color: #000; overflow: hidden; }
th { background: #0a0a0a; color: #d6d6d6; border-color: #555; font-size: 14px; overflow: hidden; }
.corner { background: linear-gradient(135deg, transparent 50%, #666 50%) 10px 5px / 12px 12px no-repeat #0a0a0a; }
thead .on, .head th { background: #666; color: #fff; }
.head td { background: #5b9bd5; color: #fff; border-color: #5b9bd5; font-size: 14px; }
.head span { display: flex; justify-content: center; overflow: hidden; height: 19px; }
.head th { border-right: 1px solid #217346; }
tbody tr:not(.head) td:nth-child(3) { background: linear-gradient(135deg, #107c10 50%, #fff 50%) 0 0 / 6px 6px no-repeat #fff; }
.head .current { position: relative; overflow: visible; }
.current::before { content: ""; position: absolute; inset: -2px -1px; border: 2px solid #217346; box-shadow: inset 0 0 0 1px #fff; }
.current::after { content: ""; position: absolute; right: -2px; bottom: -4px; width: 5px; height: 5px; background: #217346; border: 1px solid #fff; border-width: 1px 0 0 1px; }
.vscroll { display: flex; flex-direction: column; align-items: center; width: 16px; margin: 0 3px 0 2px; padding: 5px 0 1px; background: #171717; border-radius: 8px; }
.vscroll i { width: 9px; height: 87px; margin-top: 4px; border-radius: 4px; background: #9b9b9b; }
.vscroll .down { margin-top: auto; }

/* sheet tabs */
.sheets { display: grid; grid-template-columns: 718fr 648fr; height: 32px; flex: none; border-top: 1px solid #3a3a3a; font: 14px/20px "Open Sans", sans-serif; }
.sheets-left, .sheets-right { display: flex; align-items: center; }
.sheets-left { padding-left: 15px; }
.nav { width: 32px; }
.sh { margin-left: 45px; height: 28px; }
.sheets .sep { width: 1px; height: 18px; margin: 0 4px 0 10px; background: #555; }
.sheets .on + .sep { margin: 0 4px; }
.sh.on { align-self: flex-start; margin: 0; padding: 0 8px; background: #fff; color: #222; border-radius: 0 0 5px 5px; font-weight: 600; font-size: 13px; }
.sh.on span { border-bottom: 2px solid #107c41; }
.add { margin-left: 37px; }
.hscroll { display: flex; align-items: center; flex: 1; height: 16px; margin: 0 19px 0 7px; padding: 0 4px; background: #171717; border-radius: 8px; gap: 4px; }
.track { flex: 1; }
.track i { display: block; width: 66%; height: 9px; border-radius: 4px; background: #9b9b9b; }

/* status bar */
.status { display: flex; align-items: center; height: 22px; flex: none; padding: 0 11px; background: #141414; border-top: 1px solid #3a3a3a; font-size: 11px; }
.status > button { width: 16px; height: 20px; }
.pct { width: 35px; }
.status input { appearance: none; width: 102px; height: 11px; background: linear-gradient(#999, #999) 0 50% / 100% 1px no-repeat; }
.status input::-webkit-slider-thumb { appearance: none; width: 5px; height: 11px; background: #b5b5b5; }
.views { display: flex; margin-left: 2px; }
.views button { width: 40px; height: 21px; }
.views .on { background: #262626; }
.acc { margin-left: auto; margin-right: 5px; font-weight: 700; font-size: 11px; white-space: nowrap; }
.ready { margin-left: 20px; }

/* taskbar */
.taskbar { display: flex; height: 40px; flex: none; background: #101010; }
.start { width: 48px; }
.tsearch { display: flex; align-items: center; width: 288px; padding: 0 4px 0 10px; background: #3b3b3b; border: 1px solid #5c5c5c; gap: 11px; color: #d0d0d0; font-size: 14px; }
.tsearch input { flex: 1; }
.tsearch > svg:first-child { color: #fff; }
.apps { display: flex; gap: 1px; margin-left: 3px; }
.apps button { width: 48px; height: 40px; }
.apps .run { background: linear-gradient(#e08df0, #e08df0) 50% 100% / 40px 2px no-repeat; }
.apps .active { background: #9c5419; border-bottom: 2px solid #ff7a00; }
.tray { display: flex; align-items: center; margin-left: auto; }
.tray button { width: 25px; }
.tray .lang { width: 32px; font-size: 13px; }
.tray .clock { width: 68px; flex-direction: column; font-size: 11px; line-height: 18px; }
.tray .note { width: 37px; }
.desk { width: 1px; height: 40px; margin: 0 4px 0 9px; background: #555; }
```
